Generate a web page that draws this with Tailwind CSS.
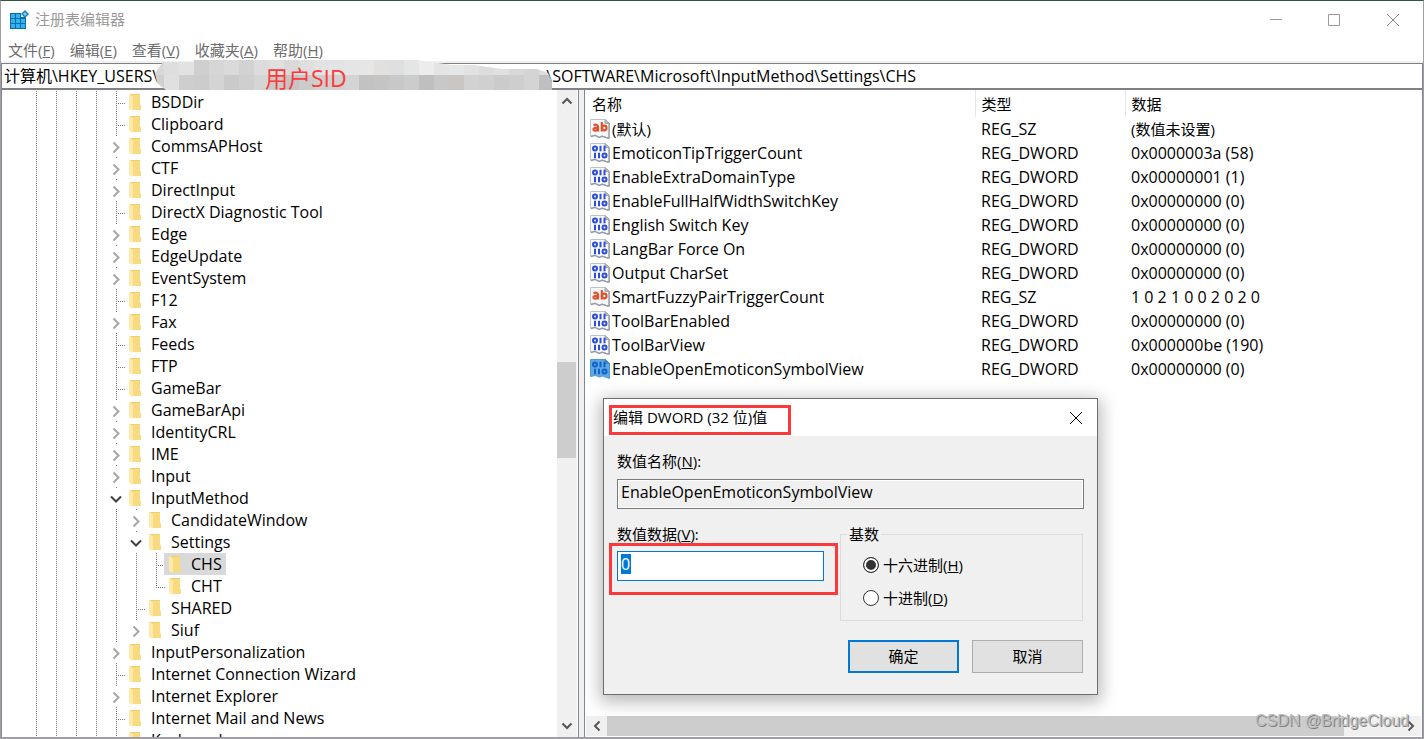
<!DOCTYPE html>
<html lang="zh-CN">
<head>
<meta charset="utf-8">
<title>注册表编辑器</title>
<script src="https://cdn.jsdelivr.net/npm/@tailwindcss/browser@4"></script>
</head>
<body class="font-['Open_Sans','Noto_Sans_CJK_SC',sans-serif] text-[15px] leading-5 text-black">
<svg class="hidden">
  <symbol id="folder" viewBox="0 0 12 18">
    <path d="M1 1h10v11l1 1v4H4z" fill="#f3cf6b"/>
    <path d="M4 2h7v10l1 1v4H4z" fill="#f8da80"/>
    <path d="M0 1l4 2v15l-4-2z" fill="#ffe9a8"/>
  </symbol>
  <symbol id="page" viewBox="0 0 20 20">
    <path d="M.5 .5h15l4 4v15l-3-1-4-1.500-3 1-4-1.500-5 1z" fill="#f6f8fa" stroke="#c0c4c8"/>
    <path d="M15 .5v4h4.500z" fill="#b8bcc0" stroke="#a4a8ac"/>
    <path d="M19 5v14M1 17.500l4-1.200 4 2.200 3-1.200 4 1.200 3 .8" fill="none" stroke="#9a9ea2" stroke-width="1.400"/>
  </symbol>
  <symbol id="digits" viewBox="0 0 20 20">
    <ellipse cx="5" cy="5.500" rx="2" ry="1.900"/>
    <path d="M10.500 2.800v5.400M14.500 2.800v5.400M5 9.800v5.400M9 9.800v5.400"/>
    <ellipse cx="14.500" cy="12.500" rx="2" ry="1.900"/>
  </symbol>
  <symbol id="string" viewBox="0 0 20 20">
    <use href="#page"/>
    <g fill="none" stroke="#e0522d" stroke-width="2.200">
      <path d="M3.500 6.200c2-.9 4.500-.7 4.500 1.300v5M8 9c-3-.4-4.600 0-4.600 1.400s3 1.600 4.600 .2M11.800 3v9.500"/>
      <ellipse cx="14.300" cy="9" rx="2.200" ry="2.300"/>
    </g>
  </symbol>
  <symbol id="binary" viewBox="0 0 20 20">
    <use href="#page"/>
    <use href="#digits" fill="none" stroke="#2c4fd8" stroke-width="2"/>
  </symbol>
  <symbol id="binary-selected" viewBox="0 0 20 20">
    <path d="M.5 .5h15l4 4v15l-3-1-4-1.500-3 1-4-1.500-5 1z" fill="#5ba8e2" stroke="#4c98d2"/>
    <path d="M15 .5v4h4.500z" fill="#3d8bc8" stroke="#3d88c0"/>
    <use href="#digits" fill="none" stroke="#1460c8" stroke-width="2"/>
  </symbol>
</svg>

<div class="relative flex h-screen flex-col overflow-hidden border-x border-t border-b-2 border-t-[#305540] border-x-[#a0a0a4] border-b-[#a0a0a4] bg-white">
  <header class="flex h-[38px] shrink-0 items-center pl-2 text-[#999999]">
    <svg class="size-5" viewBox="0 0 20 20">
      <path d="M1 3h11v4h5v12H1z" fill="#0a6cab"/>
      <g fill="#2fb4ee">
        <path d="M2 4h4v4H2zM7 4h4v4H7zM2 9h4v4H2zM7 9h4v4H7zM12 9h4v4h-4zM2 14h4v4H2zM7 14h4v4H7zM12 14h4v4h-4z"/>
      </g>
      <path d="M16 0l4 4-4 4-4-4z" fill="#1b83bd"/><path d="M16 2l2 2-2 2-2-2z" fill="#6fd0f4"/>
    </svg>
    <h1 class="ml-1.5 pb-0.5">注册表编辑器</h1>
    <div class="ml-auto flex">
      <button aria-label="最小化" class="grid h-9 w-[58px] place-items-center"><svg class="size-3" viewBox="0 0 12 12"><path d="M0 5.500h12" stroke="#999"/></svg></button>
      <button aria-label="最大化" class="grid h-9 w-[58px] place-items-center"><svg class="size-3" viewBox="0 0 12 12"><path d="M.5 .5h11v11H.5z" fill="none" stroke="#999"/></svg></button>
      <button aria-label="关闭" class="grid h-9 w-[60px] place-items-center"><svg class="size-3" viewBox="0 0 12 12"><path d="M0 0l12 12M12 0L0 12" stroke="#8a8a8a"/></svg></button>
    </div>
  </header>
  <nav class="flex h-[22px] shrink-0 items-center gap-[15px] pl-[7px] text-[#6d6d6d]">
    <button>文件(<u>F</u>)</button>
    <button>编辑(<u>E</u>)</button>
    <button>查看(<u>V</u>)</button>
    <button>收藏夹(<u>A</u>)</button>
    <button>帮助(<u>H</u>)</button>
  </nav>
  <div class="shrink-0 border-t-2 border-[#f0f0f0]">
    <input aria-label="地址" class="block h-[27px] w-full border border-b-2 border-[#808086] bg-white px-0.5 pb-0.5 text-base outline-none" value="计算机\HKEY_USERS\&#8195;&#8195;&#8195;&#8195;&#8195;&#8195;&#8195;&#8195;&#8195;&#8195;&#8195;&#8195;&#8195;&#8195;&#8195;&#8195;&#8195;&#8195;&#8195;&#8195;&#8195;&#8195;&#8195;&#8195; \SOFTWARE\Microsoft\InputMethod\Settings\CHS">
  </div>

  <div class="flex min-h-0 flex-1 bg-[#f0f0f0]">
    <section class="flex w-[578px] shrink-0 border-x border-[#828790] bg-white">
      <ul id="tree" role="tree" class="min-w-0 flex-1 overflow-hidden pt-px text-base leading-5"></ul>
      <div class="mr-px flex w-5 flex-col bg-[#f0f0f0] pr-px">
        <button aria-label="向上滚动" class="grid h-[22px] place-items-center"><svg class="h-2 w-3" viewBox="0 0 12 8"><path d="M1.500 6.500L6 2l4.500 4.500" fill="none" stroke="#555" stroke-width="2"/></svg></button>
        <div class="flex w-full flex-1 flex-col">
          <div class="flex-[250]"></div><div class="flex-[96] bg-[#cdcdcd]"></div><div class="flex-[257]"></div>
        </div>
        <button aria-label="向下滚动" class="grid h-[22px] place-items-center"><svg class="h-2 w-3" viewBox="0 0 12 8"><path d="M1.500 1.500L6 6l4.500-4.500" fill="none" stroke="#555" stroke-width="2"/></svg></button>
      </div>
    </section>
    <section class="ml-[5px] flex min-w-0 flex-1 flex-col border-x border-[#828790] bg-white">
      <table class="w-full table-fixed border-collapse text-left">
        <colgroup><col class="w-[390px]"><col class="w-[150px]"><col></colgroup>
        <thead><tr class="h-[27px]"><th class="border-r border-[#e5e5e5] p-0 pl-[7px] font-normal">名称</th><th class="border-r border-[#e5e5e5] p-0 pl-1.5 font-normal">类型</th><th class="p-0 pl-1.5 font-normal">数据</th></tr></thead>
        <tbody id="values" class="text-base leading-5"></tbody>
      </table>
      <div class="mx-px mt-auto mb-px flex h-5 bg-[#f0f0f0]">
        <button aria-label="向左滚动" class="grid w-[21px] place-items-center"><svg class="h-3 w-2" viewBox="0 0 8 12"><path d="M6.500 1.500L2 6l4.500 4.500" fill="none" stroke="#555" stroke-width="2"/></svg></button>
        <div class="flex-1"><div class="h-full w-[93%] bg-[#cdcdcd]"></div></div>
        <button aria-label="向右滚动" class="grid w-[21px] place-items-center"><svg class="h-3 w-2" viewBox="0 0 8 12"><path d="M1.500 1.500L6 6l-4.500 4.500" fill="none" stroke="#555" stroke-width="2"/></svg></button>
      </div>
    </section>
  </div>

  <!-- pixelated cover over the user's SID -->
  <svg class="absolute top-[58px] left-[151px] h-8 w-[400px]" viewBox="0 0 400 32">
    <clipPath id="cover"><path d="M42 1H265L300 6H322L350 10H385L396 14L400 22V31H14L5 24L3 14L11 3H42z"/></clipPath>
    <g id="blocks" clip-path="url(#cover)"></g>
  </svg>
  <span class="absolute top-[63px] left-[264px] text-[23px] leading-7 text-[#fb3b3b]">用户SID</span>

  <div role="dialog" aria-labelledby="dlg-title" class="absolute top-[397px] left-[602px] w-[495px] border border-[#6e6e6e] bg-[#f0f0f0] shadow-[0_4px_16px_3px_rgba(0,0,0,0.28)]">
    <div class="flex h-[37px] items-center bg-white pl-[9px]">
      <h2 id="dlg-title" class="pb-0.5">编辑 DWORD (32 位)值</h2>
      <button aria-label="关闭" class="ml-auto grid h-9 w-[42px] place-items-center"><svg class="size-3" viewBox="0 0 12 12"><path d="M0 0l12 12M12 0L0 12" stroke="#000"/></svg></button>
    </div>
    <form class="px-[13px] pt-[15px] pb-[21px]">
      <label for="vname" class="block">数值名称(<u>N</u>):</label>
      <input id="vname" readonly value="EnableOpenEmoticonSymbolView" class="mt-2 block h-[30px] w-full border border-[#7a7a7a] bg-[#f0f0f0] px-[3px] pb-1 text-base shadow-[inset_0_0_0_1px_#fff] outline-none">
      <div class="mt-[15px] flex items-start justify-between pr-px">
        <div>
          <label for="vdata" class="block">数值数据(<u>V</u>):</label>
          <div class="mt-[7px] flex h-[30px] w-[207px] items-start border border-[#0078d7] bg-white px-[3px] pt-0.5">
            <input id="vdata" value="0" class="h-5 w-[10px] bg-[#0078d7] text-base leading-5 text-white outline-none">
          </div>
        </div>
        <fieldset class="w-[243px] border border-[#dcdcdc] pt-[11px] pb-3 pl-[22px]">
          <legend class="-ml-4 px-0.5">基数</legend>
          <label class="flex items-center gap-1"><input type="radio" name="base" checked class="size-4 appearance-none rounded-full border border-[#333] bg-white checked:bg-[#333] checked:shadow-[inset_0_0_0_2px_#fff]"><span>十六进制(<u>H</u>)</span></label>
          <label class="mt-[13px] flex items-center gap-1"><input type="radio" name="base" class="size-4 appearance-none rounded-full border border-[#333] bg-white checked:bg-[#333] checked:shadow-[inset_0_0_0_2px_#fff]"><span>十进制(<u>D</u>)</span></label>
        </fieldset>
      </div>
      <div class="mt-[19px] flex justify-end gap-[13px] pr-px">
        <button type="button" class="h-[33px] w-[111px] border-2 border-[#0078d7] bg-[#e1e1e1] pb-0.5">确定</button>
        <button type="button" class="h-[33px] w-[111px] border border-[#adadad] bg-[#e1e1e1] pb-0.5">取消</button>
      </div>
    </form>
    <div class="pointer-events-none absolute top-[6px] left-[5px] h-[30px] w-[182px] border-3 border-[#fa3a3a]"></div>
    <div class="pointer-events-none absolute top-[144px] left-[5px] h-[52px] w-[229px] border-3 border-[#fa3a3a]"></div>
  </div>

  <span class="absolute right-3.5 bottom-1 font-['Liberation_Sans',sans-serif] text-[16px] leading-6 text-[#bcbcbc] [text-shadow:1px_1px_0_#808080]">CSDN @BridgeCloud</span>
</div>

<script>
  // [depth, kind, name]: kind is "leaf", "last", "closed" or "open"
  const keys = [
    [0,'leaf','BSDDir'],[0,'leaf','Clipboard'],[0,'closed','CommsAPHost'],[0,'closed','CTF'],[0,'closed','DirectInput'],
    [0,'leaf','DirectX Diagnostic Tool'],[0,'closed','Edge'],[0,'closed','EdgeUpdate'],[0,'closed','EventSystem'],
    [0,'leaf','F12'],[0,'closed','Fax'],[0,'leaf','Feeds'],[0,'leaf','FTP'],[0,'leaf','GameBar'],[0,'closed','GameBarApi'],
    [0,'closed','IdentityCRL'],[0,'closed','IME'],[0,'closed','Input'],[0,'open','InputMethod'],[1,'closed','CandidateWindow'],
    [1,'open','Settings'],[2,'leaf','CHS'],[2,'last','CHT'],[1,'leaf','SHARED'],[1,'closed','Siuf'],
    [0,'closed','InputPersonalization'],[0,'leaf','Internet Connection Wizard'],[0,'closed','Internet Explorer'],
    [0,'leaf','Internet Mail and News'],[0,'leaf','Keyboard']
  ];
  const guide = '<svg class="h-[22px] w-5 shrink-0" viewBox="0 0 20 22"><path d="M10.500 0v22" stroke="#777" stroke-dasharray="1 1"/></svg>';
  // level-1 rows after the last sibling ("Siuf") have no guide for the finished branch
  const nodes = {
    leaf: '<svg class="h-[22px] w-5 shrink-0" viewBox="0 0 20 22"><path d="M10.500 0v22M12 12.500h8" stroke="#777" stroke-dasharray="1 1"/></svg>',
    last: '<svg class="h-[22px] w-5 shrink-0" viewBox="0 0 20 22"><path d="M10.500 0v13M12 12.500h8" stroke="#777" stroke-dasharray="1 1"/></svg>',
    closed: '<button aria-label="展开" class="h-[22px] w-5 shrink-0"><svg class="h-[22px] w-5" viewBox="0 0 20 22"><path d="M7.500 7.500l5 5-5 5" fill="none" stroke="#a6a6a6" stroke-width="2"/><path d="M10.500 0v1" stroke="#777"/></svg></button>',
    open: '<button aria-label="折叠" class="h-[22px] w-5 shrink-0"><svg class="h-[22px] w-5" viewBox="0 0 20 22"><path d="M5 9.500l5 5 5-5" fill="none" stroke="#404040" stroke-width="2"/><path d="M10.500 0v1" stroke="#777"/></svg></button>'
  };
  document.getElementById('tree').innerHTML = keys.map(([depth, kind, name]) =>
    `<li role="treeitem" class="flex h-[22px] items-center pl-6">${guide.repeat(4 + depth)}${nodes[kind]}` +
    `<span class="${name === 'CHS' ? '-ml-0.5 flex h-[22px] items-center bg-[#d9d9d9] pr-1 pl-[5px]' : 'flex h-[22px] items-center pr-1 pl-[3px]'}">` +
    `<svg class="mr-2.5 h-[18px] w-3" viewBox="0 0 12 18"><use href="#folder"/></svg><span class="whitespace-nowrap">${name}</span></span></li>`).join('');

  const values = [
    ['string','(默认)','REG_SZ','(数值未设置)'],
    ['binary','EmoticonTipTriggerCount','REG_DWORD','0x0000003a (58)'],
    ['binary','EnableExtraDomainType','REG_DWORD','0x00000001 (1)'],
    ['binary','EnableFullHalfWidthSwitchKey','REG_DWORD','0x00000000 (0)'],
    ['binary','English Switch Key','REG_DWORD','0x00000000 (0)'],
    ['binary','LangBar Force On','REG_DWORD','0x00000000 (0)'],
    ['binary','Output CharSet','REG_DWORD','0x00000000 (0)'],
    ['string','SmartFuzzyPairTriggerCount','REG_SZ','1 0 2 1 0 0 2 0 2 0'],
    ['binary','ToolBarEnabled','REG_DWORD','0x00000000 (0)'],
    ['binary','ToolBarView','REG_DWORD','0x000000be (190)'],
    ['binary-selected','EnableOpenEmoticonSymbolView','REG_DWORD','0x00000000 (0)']
  ];
  const size = text => /[\u4e00-\u9fff]/.test(text) ? 'text-[15px]' : 'text-base leading-5';
  document.getElementById('values').innerHTML = values.map(([icon, name, type, data]) =>
    `<tr class="h-6"><td class="p-0 pl-[5px]"><span class="flex items-center gap-0.5"><svg class="size-5" viewBox="0 0 20 20"><use href="#${icon}"/></svg><span class="${size(name)}">${name}</span></span></td>` +
    `<td class="p-0 pl-1.5">${type}</td><td class="p-0 pl-1.5"><span class="${size(data)}">${data}</span></td></tr>`).join('');

  const upper = ['#d8d8d8','#dedede','#e2e2e2','#cfcfcf','#d6d6d6','#dadada','#d2d2d2','#dcdcdc','#e0e0e0','#d9d9d9','#dfdfdf','#e3e3e3','#e2e4e6','#e4e6e6','#e6e6e6','#e2dfdf','#dfdfe1','#e4e6e6','#ececec','#e4e4e4','#e6e8e8','#e2e2e2','#dddddd','#e0e0e0','#d8d8d8','#d4d4d4','#dcdcdc'];
  const lower = ['#d0d0d0','#e0e0e0','#cecece','#cccccc','#d4d4d4','#cacaca','#cfcfcf','#d5d5d5','#c9c9c9','#c4c4c4','#cbcbcb','#cfcfcf','#d0d0d0','#d4d4d4','#c2c2c2','#c4c4c4','#c8c8c8','#cccccc','#bfbfbf','#c8c8c8','#cac6c2','#d2d2d2','#d0d0d0','#cbcbcb','#cecece','#d4d4d4','#bfbfc2'];
  document.getElementById('blocks').innerHTML = upper.map((c, i) =>
    `<rect x="${i * 15 - 3}" y="0" width="15" height="16" fill="${c}"/><rect x="${i * 15 - 3}" y="16" width="15" height="16" fill="${lower[i]}"/>`).join('');
</script>
</body>
</html>
